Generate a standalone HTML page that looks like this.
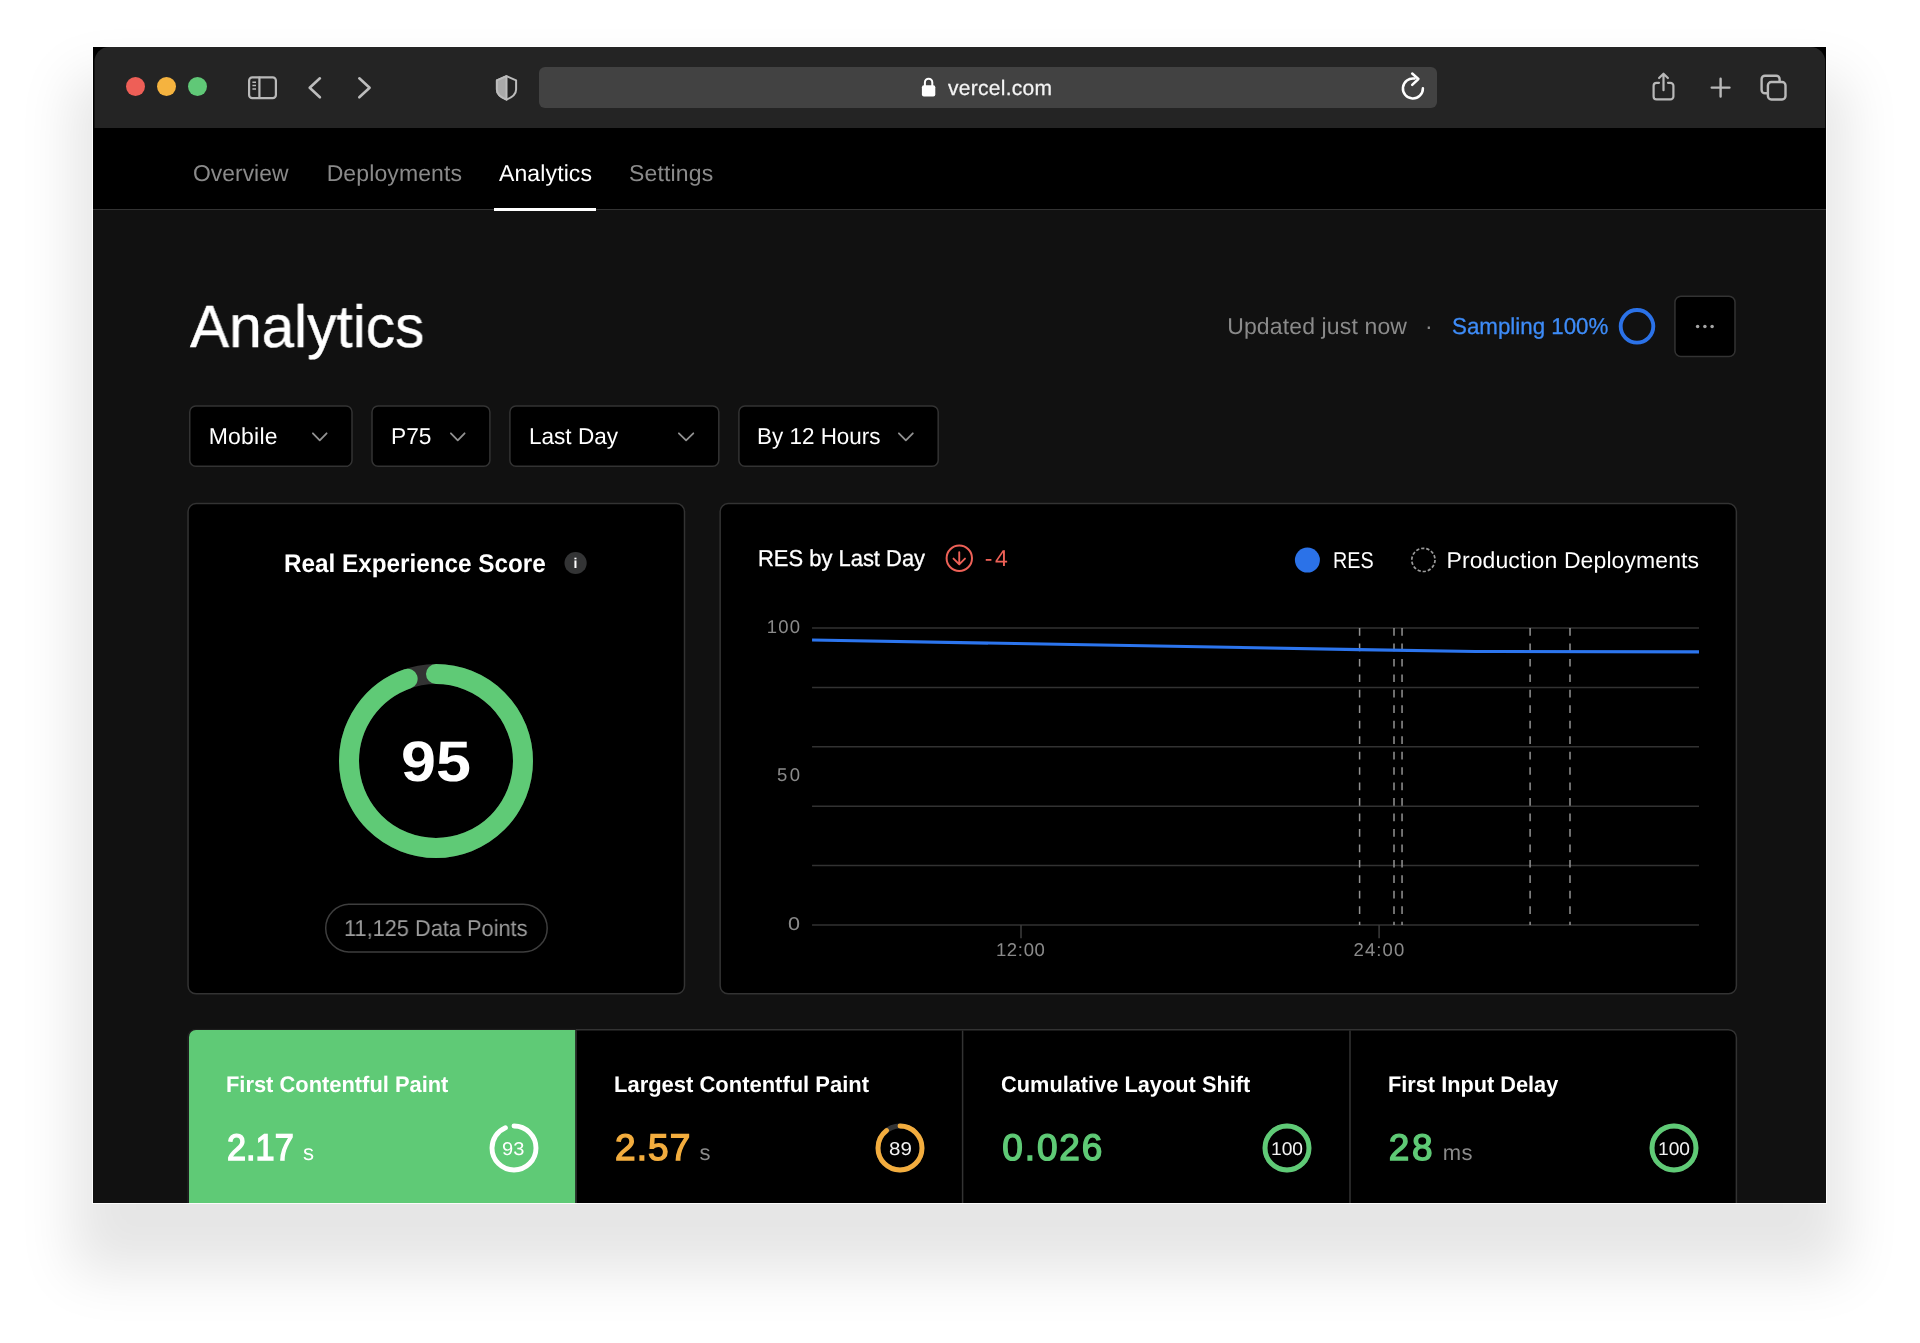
<!DOCTYPE html>
<html lang="en"><head><meta charset="utf-8"><title>Analytics – Vercel</title>
<style>
html,body{margin:0;padding:0}
body{width:1920px;height:1343px;background:#fff;overflow:hidden;position:relative;font-family:"Liberation Sans",sans-serif;text-rendering:geometricPrecision}
#shadow{position:absolute;left:93.3px;top:47px;width:1733px;height:1156px;box-shadow:0 50px 52px 20px rgba(0,0,0,0.10);outline:1px solid rgba(255,255,255,0.85)}
#win{position:absolute;left:0;top:0;width:1920px;height:1343px;will-change:transform;clip-path:inset(47px 94px 140px 93px)}
#winbg{position:absolute;left:93.3px;top:47px;width:1733px;height:1156px;background:#111}
#barbg{position:absolute;left:93px;top:47px;width:1734px;height:82px;background:#000}
#bar{position:absolute;left:0;top:0;width:1920px;height:140px}
#nav{position:absolute;left:93.3px;top:128.4px;width:1733px;height:81px;background:#000}
#navline{position:absolute;left:93.3px;top:208.8px;width:1733px;height:1.2px;background:#333}
#url{position:absolute;left:539px;top:67.4px;width:898px;height:40.6px;border-radius:6px;background:#424242}
.abs{position:absolute}
.t{position:absolute;line-height:1;white-space:pre;transform-origin:0 50%}
</style></head>
<body>
<div id="shadow"></div>
<div id="winbg"></div>
<div id="win">
<div id="barbg"></div>
<svg id="bar" viewBox="0 0 1920 140"><path d="M94.5 128.4V61.5a14.5 14.5 0 0 1 14.5 -14.5H1810.7a14.5 14.5 0 0 1 14.5 14.5V128.4Z" fill="#242424"/></svg>
<div id="nav"></div>
<div id="navline"></div>
<div id="url"></div>
<svg class="abs" style="left:0;top:0" width="1920" height="1343" viewBox="0 0 1920 1343">
<rect x="189.75" y="405.95" width="162.25" height="60.40" rx="6" fill="#000" stroke="#333" stroke-width="1.5"/>
<rect x="372.00" y="405.95" width="117.90" height="60.40" rx="6" fill="#000" stroke="#333" stroke-width="1.5"/>
<rect x="509.90" y="405.95" width="208.90" height="60.40" rx="6" fill="#000" stroke="#333" stroke-width="1.5"/>
<rect x="738.90" y="405.95" width="199.30" height="60.40" rx="6" fill="#000" stroke="#333" stroke-width="1.5"/>
<rect x="1674.95" y="296.30" width="60.05" height="60.20" rx="6" fill="#000" stroke="#333" stroke-width="1.5"/>
<rect x="188.05" y="503.60" width="496.45" height="490.25" rx="8" fill="#000" stroke="#333" stroke-width="1.5"/>
<rect x="720.15" y="503.60" width="1016.25" height="490.25" rx="8" fill="#000" stroke="#333" stroke-width="1.5"/>
<rect x="325.70" y="904.20" width="221.50" height="47.90" rx="23.95" fill="#000" stroke="#3e3e3e" stroke-width="1.5"/>
<path d="M188.05 1260V1037.75a8 8 0 0 1 8 -8H1728.4a8 8 0 0 1 8 8V1260" fill="#000" stroke="#333" stroke-width="1.5"/>
<path d="M188.05 1260V1037.75a8 8 0 0 1 8 -8H576" fill="none" stroke="#1d1d1d" stroke-width="2.2"/>
<path d="M189 1260V1037a7 7 0 0 1 7 -7H575.4V1260Z" fill="#5fca76"/>
<path d="M576.2 1030V1260" stroke="#2a2a2a" stroke-width="1.5"/>
<path d="M962.6 1030.5V1260M1350 1030.5V1260" stroke="#333" stroke-width="1.5"/>
</svg>
<div class="abs" style="left:126.0px;top:76.5px;width:19px;height:19px;border-radius:50%;background:#ee5f57"></div>
<div class="abs" style="left:157.2px;top:76.5px;width:19px;height:19px;border-radius:50%;background:#f5b33f"></div>
<div class="abs" style="left:188.3px;top:76.5px;width:19px;height:19px;border-radius:50%;background:#60c877"></div>
<svg class="abs" style="left:0;top:0" width="1920" height="220" viewBox="0 0 1920 220" fill="none" stroke-linecap="round" stroke-linejoin="round">
<g stroke="#b9b9b9" stroke-width="2.2">
<rect x="249.1" y="77.3" width="26.8" height="20.8" rx="3.2"/>
<path d="M259.4 77.5V98"/>
<path d="M252.4 82.3h3.6M252.4 85.6h3.6M252.4 88.9h3.6" stroke-width="1.5" stroke-linecap="butt"/>
</g>
<g stroke="#bdbdbd" stroke-width="2.6">
<path d="M319.9 78.3L309.7 87.8L319.9 97.3"/>
<path d="M359.3 78.3L369.6 87.8L359.3 97.3"/>
</g>
<g>
<path d="M506.5 76.2L516.1 80.3V89.5C516.1 94.5 511.5 97.6 506.5 99.7C501.500 97.6 496.9 94.5 496.9 89.5V80.300Z" stroke="#bcbcbc" stroke-width="2"/>
<path d="M506.5 76.2V99.7C501.5 97.6 496.9 94.5 496.9 89.5V80.3Z" fill="#a9a9a9" stroke="#bcbcbc" stroke-width="2"/>
</g>
<g>
<rect x="921.9" y="85.2" width="13.4" height="11.2" rx="2" fill="#fff"/>
<path d="M924.9 86V82.4a3.700 3.700 0 0 1 7.400 0V86" stroke="#fff" stroke-width="2"/>
</g>
<g stroke="#fff" stroke-width="2.5">
<path d="M1422.9 88.3A10 10 0 1 1 1414.600 78.600"/>
<path d="M1412.2 73.5L1418.4 79L1412.2 84.800"/>
</g>
<g stroke="#b9b9b9" stroke-width="2.200">
<path d="M1659 82.800H1656.600a3 3 0 0 0 -3 3V96.400a3 3 0 0 0 3 3H1670.400a3 3 0 0 0 3 -3V85.800a3 3 0 0 0 -3 -3H1668"/>
<path d="M1663.5 90.2V74.2M1659.1 78L1663.5 73.700L1667.9 78"/>
<path d="M1720.6 78.7V96.500M1711.7 87.600H1729.500" stroke-width="2.4"/>
<rect x="1761.600" y="75.700" width="18" height="17.600" rx="3.400" stroke-width="2.4"/>
<rect x="1767.900" y="82" width="17.600" height="17.500" rx="3.400" fill="#242424" stroke-width="2.4"/>
</g>
</svg>
<div class="t" style="left:948.08px;top:78px;font-size:21px;color:#f4f4f4;letter-spacing:0.267px;-webkit-text-stroke:0.25px #f4f4f4;">vercel.com</div>
<div class="t" style="left:193.45px;top:162px;font-size:23px;color:#8a8a8a;transform:scaleX(0.9958);">Overview</div>
<div class="t" style="left:326.65px;top:162px;font-size:23px;color:#8a8a8a;letter-spacing:0.110px;">Deployments</div>
<div class="t" style="left:499.00px;top:162px;font-size:23px;color:#ffffff;letter-spacing:0.119px;">Analytics</div>
<div class="t" style="left:628.90px;top:162px;font-size:23px;color:#8a8a8a;letter-spacing:0.186px;">Settings</div>
<div class="abs" style="left:493.5px;top:207.5px;width:102px;height:3px;background:#fff"></div>
<div class="t" style="left:190.00px;top:297px;font-size:59.5px;color:#ffffff;transform:scaleX(0.9846);-webkit-text-stroke:0.4px #ffffff;">Analytics</div>
<div class="t" style="left:1227.15px;top:315px;font-size:23px;color:#8a8a8a;letter-spacing:0.137px;">Updated just now</div>
<div class="t" style="left:1425.10px;top:315px;font-size:23px;color:#8a8a8a;">·</div>
<div class="t" style="left:1451.58px;top:315px;font-size:23px;color:#3e8cf8;transform:scaleX(0.9706);-webkit-text-stroke:0.3px #3e8cf8;">Sampling 100%</div>
<svg class="abs" style="left:1612px;top:302px" width="50" height="50" viewBox="1612 302 50 50"><circle cx="1637" cy="326.3" r="16.3" fill="none" stroke="#2b72e8" stroke-width="3.9"/></svg>
<svg class="abs" style="left:1690px;top:320px" width="30" height="14" viewBox="1690 320 30 14" fill="#a6a6a6"><circle cx="1697.6" cy="326.4" r="1.75"/><circle cx="1704.9" cy="326.4" r="1.75"/><circle cx="1712.1" cy="326.4" r="1.75"/></svg>
<div class="t" style="left:208.75px;top:425px;font-size:23px;color:#ffffff;letter-spacing:0.200px;">Mobile</div>
<svg class="abs" style="left:310.0px;top:428.6px;overflow:visible" width="20" height="16"><path d="M2.9 4.3L9.75 11.3L16.60 4.3" fill="none" stroke="#929292" stroke-width="1.8" stroke-linecap="round" stroke-linejoin="round"/></svg>
<div class="t" style="left:390.77px;top:425px;font-size:23px;color:#ffffff;transform:scaleX(0.9882);">P75</div>
<svg class="abs" style="left:447.8px;top:428.6px;overflow:visible" width="20" height="16"><path d="M2.9 4.3L9.75 11.3L16.60 4.3" fill="none" stroke="#929292" stroke-width="1.8" stroke-linecap="round" stroke-linejoin="round"/></svg>
<div class="t" style="left:528.59px;top:425px;font-size:23px;color:#ffffff;transform:scaleX(0.9809);">Last Day</div>
<svg class="abs" style="left:676.3px;top:428.6px;overflow:visible" width="20" height="16"><path d="M2.9 4.3L10.10 11.3L17.30 4.3" fill="none" stroke="#929292" stroke-width="1.8" stroke-linecap="round" stroke-linejoin="round"/></svg>
<div class="t" style="left:757.39px;top:425px;font-size:23px;color:#ffffff;transform:scaleX(0.9758);">By 12 Hours</div>
<svg class="abs" style="left:896.3px;top:428.6px;overflow:visible" width="20" height="16"><path d="M2.9 4.3L9.85 11.3L16.80 4.3" fill="none" stroke="#929292" stroke-width="1.8" stroke-linecap="round" stroke-linejoin="round"/></svg>
<div class="t" style="left:284.08px;top:552px;font-size:25.5px;color:#ffffff;transform:scaleX(0.9521);font-weight:700;">Real Experience Score</div>
<svg class="abs" style="left:560px;top:548px" width="32" height="32" viewBox="560 548 32 32"><circle cx="575.6" cy="563" r="11.1" fill="#333435"/></svg>
<div class="t" style="left:573.60px;top:556px;font-size:14px;color:#ffffff;font-weight:700;">i</div>
<svg class="abs" style="left:336.2px;top:661px" width="200" height="200" viewBox="-100 -100 200 200">
<circle r="87" fill="none" stroke="#333" stroke-width="20"/>
<circle r="87" fill="none" stroke="#5fca76" stroke-width="20" stroke-linecap="round" stroke-dasharray="516.85 546.64" transform="rotate(-90)"/>
</svg>
<div class="t" style="left:401.45px;top:734px;font-size:57px;color:#ffffff;transform:scaleX(1.1035);font-weight:700;">95</div>
<div class="t" style="left:344.44px;top:917px;font-size:23px;color:#9c9c9c;transform:scaleX(0.9462);">11,125 Data Points</div>
<div class="t" style="left:757.58px;top:547px;font-size:23px;color:#ffffff;transform:scaleX(0.9539);-webkit-text-stroke:0.3px #ffffff;">RES by Last Day</div>
<div class="t" style="left:984.80px;top:547px;font-size:23px;color:#ee6157;letter-spacing:2.500px;">-4</div>
<div class="t" style="left:1332.51px;top:549px;font-size:23px;color:#ffffff;transform:scaleX(0.8581);">RES</div>
<div class="t" style="left:1446.45px;top:549px;font-size:23px;color:#ffffff;letter-spacing:0.100px;">Production Deployments</div>
<svg class="abs" style="left:0;top:500px" width="1920" height="500" viewBox="0 500 1920 500" fill="none">
<path d="M812.06 628.00H1699" stroke="#323232" stroke-width="1.5"/>
<path d="M812.06 687.38H1699" stroke="#323232" stroke-width="1.5"/>
<path d="M812.06 746.76H1699" stroke="#323232" stroke-width="1.5"/>
<path d="M812.06 806.14H1699" stroke="#323232" stroke-width="1.5"/>
<path d="M812.06 865.52H1699" stroke="#323232" stroke-width="1.5"/>
<path d="M812.06 924.90H1699" stroke="#323232" stroke-width="1.5"/>
<path d="M1021 925V938.2" stroke="#3d3d3d" stroke-width="1.5"/>
<path d="M1379.1 925V938.2" stroke="#3d3d3d" stroke-width="1.5"/>
<path d="M1359.6 628.0V925" stroke="#929292" stroke-width="1.5" stroke-dasharray="7.7 7.76"/>
<path d="M1394.0 628.0V925" stroke="#929292" stroke-width="1.5" stroke-dasharray="7.7 7.76"/>
<path d="M1402.05 628.0V925" stroke="#929292" stroke-width="1.5" stroke-dasharray="7.7 7.76"/>
<path d="M1530.1 628.0V925" stroke="#929292" stroke-width="1.5" stroke-dasharray="7.7 7.76"/>
<path d="M1570.0 628.0V925" stroke="#929292" stroke-width="1.5" stroke-dasharray="7.7 7.76"/>
<path d="M812.06 640L1359 649.6L1475 651.5L1699 651.9" stroke="#2c75ee" stroke-width="3.1" stroke-linejoin="round"/>
<circle cx="1307.4" cy="560.1" r="12.5" fill="#2b72e8"/>
<circle cx="1423.4" cy="559.9" r="11.6" stroke="#9a9a9a" stroke-width="1.7" stroke-dasharray="3.3 1.9"/>
<circle cx="959.3" cy="558.2" r="12.7" stroke="#ee6157" stroke-width="2"/>
<path d="M959.25 552.3V564.2M953.5 558.6L959.25 564.4L965 558.6" stroke="#ee6157" stroke-width="1.9" stroke-linecap="round" stroke-linejoin="round"/>
</svg>
<div class="t" style="left:766.80px;top:618px;font-size:18.5px;color:#8a8a8a;letter-spacing:1.200px;">100</div>
<div class="t" style="left:777.10px;top:766px;font-size:18.5px;color:#8a8a8a;letter-spacing:2.400px;">50</div>
<div class="t" style="left:788.18px;top:915px;font-size:18.5px;color:#8a8a8a;transform:scaleX(1.1685);">0</div>
<div class="t" style="left:995.90px;top:941px;font-size:18.5px;color:#8a8a8a;letter-spacing:0.675px;">12:00</div>
<div class="t" style="left:1353.60px;top:941px;font-size:18.5px;color:#8a8a8a;letter-spacing:1.075px;">24:00</div>
<div class="t" style="left:225.74px;top:1074px;font-size:22.5px;color:#ffffff;transform:scaleX(0.9722);font-weight:700;">First Contentful Paint</div>
<div class="t" style="left:226.83px;top:1129px;font-size:37px;color:#ffffff;transform:scaleX(0.9262);-webkit-text-stroke:1.4px #ffffff;">2.17</div>
<div class="t" style="left:302.90px;top:1142px;font-size:22px;color:#ffffff;letter-spacing:0.250px;">s</div>
<svg class="abs" style="left:487.70px;top:1121.80px" width="52" height="52" viewBox="-26 -26 52 52"><circle r="22.0" fill="none" stroke="none" stroke-width="4.9"/><circle r="22.0" fill="none" stroke="#ffffff" stroke-width="4.9" stroke-linecap="round" stroke-dasharray="128.55 138.23" transform="rotate(-90)"/></svg>
<div class="t" style="left:502.38px;top:1140px;font-size:18.5px;color:#ffffff;transform:scaleX(1.0871);">93</div>
<div class="t" style="left:614.24px;top:1074px;font-size:22.5px;color:#ffffff;transform:scaleX(0.9761);font-weight:700;">Largest Contentful Paint</div>
<div class="t" style="left:615.05px;top:1129px;font-size:37px;color:#f3ad3e;letter-spacing:1.050px;-webkit-text-stroke:1.4px #f3ad3e;">2.57</div>
<div class="t" style="left:699.60px;top:1142px;font-size:22px;color:#8a8a8a;letter-spacing:0.350px;">s</div>
<svg class="abs" style="left:874.40px;top:1121.80px" width="52" height="52" viewBox="-26 -26 52 52"><circle r="22.0" fill="none" stroke="#333435" stroke-width="4.9"/><circle r="22.0" fill="none" stroke="#f3ad3e" stroke-width="4.9" stroke-linecap="round" stroke-dasharray="123.02 138.23" transform="rotate(-90)"/></svg>
<div class="t" style="left:889.21px;top:1140px;font-size:18.5px;color:#f2f2f2;transform:scaleX(1.1082);">89</div>
<div class="t" style="left:1001.13px;top:1074px;font-size:22.5px;color:#ffffff;transform:scaleX(0.9680);font-weight:700;">Cumulative Layout Shift</div>
<div class="t" style="left:1002.30px;top:1129px;font-size:37px;color:#5fca76;letter-spacing:1.875px;-webkit-text-stroke:1.4px #5fca76;">0.026</div>
<svg class="abs" style="left:1261.20px;top:1121.80px" width="52" height="52" viewBox="-26 -26 52 52"><circle r="22.0" fill="none" stroke="#333" stroke-width="4.9"/><circle r="22.0" fill="none" stroke="#5fca76" stroke-width="4.9" stroke-linecap="round" stroke-dasharray="138.23 138.23" transform="rotate(-90)"/></svg>
<div class="t" style="left:1270.85px;top:1140px;font-size:18.5px;color:#f2f2f2;transform:scaleX(1.0382);">100</div>
<div class="t" style="left:1387.55px;top:1074px;font-size:22.5px;color:#ffffff;transform:scaleX(0.9659);font-weight:700;">First Input Delay</div>
<div class="t" style="left:1388.65px;top:1129px;font-size:37px;color:#5fca76;letter-spacing:2.850px;-webkit-text-stroke:1.4px #5fca76;">28</div>
<div class="t" style="left:1442.85px;top:1142px;font-size:22px;color:#8a8a8a;letter-spacing:0.250px;">ms</div>
<svg class="abs" style="left:1647.90px;top:1121.80px" width="52" height="52" viewBox="-26 -26 52 52"><circle r="22.0" fill="none" stroke="#333" stroke-width="4.9"/><circle r="22.0" fill="none" stroke="#5fca76" stroke-width="4.9" stroke-linecap="round" stroke-dasharray="138.23 138.23" transform="rotate(-90)"/></svg>
<div class="t" style="left:1657.55px;top:1140px;font-size:18.5px;color:#f2f2f2;transform:scaleX(1.0382);">100</div>
</div>
</body></html>
